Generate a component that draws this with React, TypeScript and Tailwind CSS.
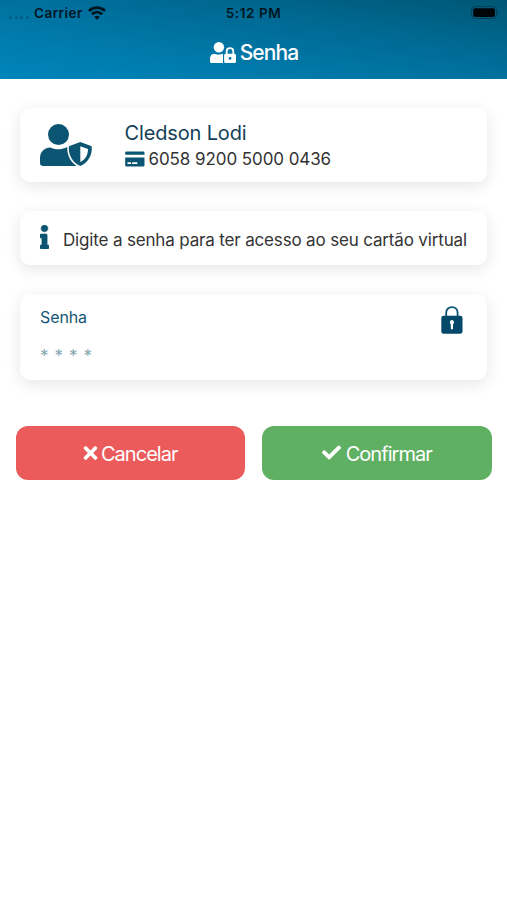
import type { ReactNode } from "react";
import { FaCheck, FaInfo, FaTimes } from "react-icons/fa";

function WifiIcon() {
  return (
    <svg width="18" height="14" viewBox="0 0 18 14" fill="none" stroke="#00151f" strokeWidth="2.7">
      <path d="M0.9 5A11.6 11.6 0 0 1 17.1 5" />
      <path d="M3.8 8.2A7.4 7.4 0 0 1 14.2 8.2" />
      <path d="M9 13.8L6.2 10.9A4.2 4.2 0 0 1 11.8 10.9Z" fill="#00151f" stroke="none" />
    </svg>
  );
}

function BatteryIcon() {
  return (
    <svg width="29" height="14" viewBox="0 0 29 14">
      <rect x="0.6" y="0.6" width="25" height="12" rx="3.6" fill="none" stroke="#003f57" strokeWidth="1" />
      <rect x="2.2" y="2.2" width="21.8" height="8.9" rx="2" fill="#000508" />
      <path d="M27 5.2C28.1 5.8 28.1 7.4 27 8Z" fill="#003f57" />
    </svg>
  );
}

function UserLockIcon() {
  return (
    <svg width="26" height="21" viewBox="0 0 26 21" fill="#fff">
      <circle cx="8.9" cy="5.3" r="5.2" />
      <path d="M4.3 11.8C6.2 12.9 10 12.9 13 11.8V21H1.6Q0 21 0 19.4V16.6Q0 12.4 4.3 11.8Z" />
      <path d="M16.7 12.5V9.3C16.7 5 23.3 5 23.3 9.3V12.5" fill="none" stroke="#fff" strokeWidth="1.8" />
      <path
        fillRule="evenodd"
        d="M15.6 11.8H24.4Q26 11.8 26 13.4V19.4Q26 21 24.4 21H15.6Q14.1 21 14.1 19.4V13.4Q14.1 11.8 15.6 11.8ZM20 15A1.4 1.4 0 1 0 20 17.8A1.4 1.4 0 1 0 20 15Z"
      />
    </svg>
  );
}

function UserShieldIcon() {
  return (
    <svg className="mt-4 ml-5 overflow-visible" width="52" height="42" viewBox="0 0 52 42" fill="#0b5573">
      <circle cx="18.5" cy="10.6" r="10.5" />
      <path d="M10.5 23.4C14.5 25.8 21.5 25.8 26 23.4Q28 23 30 24L37 42H3.2Q0 42 0 38.8V34.4C0 27.5 4.5 23.4 10.5 23.4Z" />
      <path
        d="M40.3 18L51.7 22.3C52.5 31 48.3 38.6 40.3 42C32.3 38.6 28.1 31 28.9 22.3Z"
        stroke="#fff"
        strokeWidth="3"
        strokeLinejoin="round"
        paintOrder="stroke"
      />
      <path d="M40.3 22.2L48 25C48 30.8 45.6 35.4 40.3 38Z" fill="#fff" />
    </svg>
  );
}

function CardIcon() {
  return (
    <svg width="20" height="16" viewBox="0 0 20 16" fill="#0b5573">
      <path d="M1.4 0.5H18.2Q19.5 0.5 19.5 1.8V3.7H0.2V1.8Q0.2 0.5 1.4 0.5Z" />
      <path
        fillRule="evenodd"
        d="M0.2 6.6H19.5V14.2Q19.5 15.5 18.2 15.5H1.4Q0.2 15.5 0.2 14.2ZM2.5 11.2V12.9H6V11.2ZM7.1 11.2V12.9H12.3V11.2Z"
      />
    </svg>
  );
}

function PadlockIcon() {
  return (
    <svg width="22" height="28" viewBox="0 0 22 28">
      <path d="M5.2 11V6.8C5.2 -0.8 16.6 -0.8 16.6 6.8V11" fill="none" stroke="#0b5573" strokeWidth="1.8" />
      <rect x="0.3" y="9.8" width="21.2" height="17.9" rx="2.2" fill="#04496a" />
      <path d="M10.9 14A2.3 2.3 0 0 1 12 18.2V22.2Q12 23.4 10.9 23.4T9.8 22.2V18.2A2.3 2.3 0 0 1 10.9 14Z" fill="#fff" />
    </svg>
  );
}

function Card({ className, children }: { className: string; children: ReactNode }) {
  return (
    <section className={`mx-5 rounded-[10px] bg-white shadow-[0_4px_16px_rgba(0,0,0,0.1)] ${className}`}>
      {children}
    </section>
  );
}

export default function App() {
  return (
    <div className="h-[900px] w-[507px] overflow-hidden bg-white font-['Inter','Liberation_Sans',sans-serif]">
      <header className="h-[79px] bg-[linear-gradient(to_top_right,#0085bb,#0078a8_35%,#006a94_65%,#005674)]">
        <div className="grid h-[26px] grid-cols-3 items-center text-[13.5px] font-semibold text-[#00151f]">
          <div className="flex items-center pl-[9px]">
            <div className="mt-2 mr-[5px] flex gap-[2.7px]">
              {[0, 1, 2, 3].map((dot) => (
                <span key={dot} className="size-[3px] rounded-full bg-[#005d82]" />
              ))}
            </div>
            <span className="mr-[5px] tracking-[0.45px]">Carrier</span>
            <WifiIcon />
          </div>
          <time className="text-center tracking-[0.6px]">5:12 PM</time>
          <div className="flex justify-end pr-[7px]">
            <BatteryIcon />
          </div>
        </div>
        <h1 className="flex h-[53px] items-center justify-center gap-[4px] pl-px text-[21px] font-medium tracking-[-0.9px] text-white">
          <UserLockIcon />
          Senha
        </h1>
      </header>

      <main className="pt-[29px]">
        <Card className="flex h-[74px] items-start">
          <UserShieldIcon />
          <div className="ml-[32.5px] pt-3">
            <p className="text-[20px] leading-[26px] tracking-[-0.15px] text-[#133f58]">Cledson Lodi</p>
            <p className="flex items-center gap-1 text-[17px] leading-[26px] tracking-[-0.08px] text-[#333]">
              <CardIcon />
              6058 9200 5000 0436
            </p>
          </div>
        </Card>

        <Card className="mt-[29px] flex h-[54px] items-center">
          <FaInfo className="mb-[2px] ml-5 h-6 w-[9px] text-[#0b5573]" stroke="#0b5573" strokeWidth="12" />
          <p className="ml-[14px] pt-[5px] text-[17px] tracking-[-0.16px] whitespace-nowrap text-[#333]">
            Digite a senha para ter acesso ao seu cartão virtual
          </p>
        </Card>

        <Card className="mt-[29px] flex h-[86px] items-start justify-between pr-6 pl-5">
          <div className="pt-[11px]">
            <label className="block text-[16px] leading-6 tracking-[-0.1px] text-[#165674]">Senha</label>
            <p className="mt-[15px] text-[17px] leading-6 tracking-[0.6px] text-[#83a6b3]">* * * *</p>
          </div>
          <div className="pt-3">
            <PadlockIcon />
          </div>
        </Card>

        <div className="mx-[15.5px] mt-[46px] grid grid-cols-2 gap-[17px]">
          <button className="flex h-[54px] items-center justify-center gap-[3px] rounded-xl bg-[#ec5b5b] pt-[2px] text-[20px] tracking-[-0.95px] text-white">
            <FaTimes className="mb-[3px] h-5 w-[15px]" />
            Cancelar
          </button>
          <button className="flex h-[54px] items-center justify-center gap-[5px] rounded-xl bg-[#60b064] pt-[2px] text-[20px] tracking-[-0.95px] text-white">
            <FaCheck className="mb-[3px] size-[19px]" />
            Confirmar
          </button>
        </div>
      </main>
    </div>
  );
}
